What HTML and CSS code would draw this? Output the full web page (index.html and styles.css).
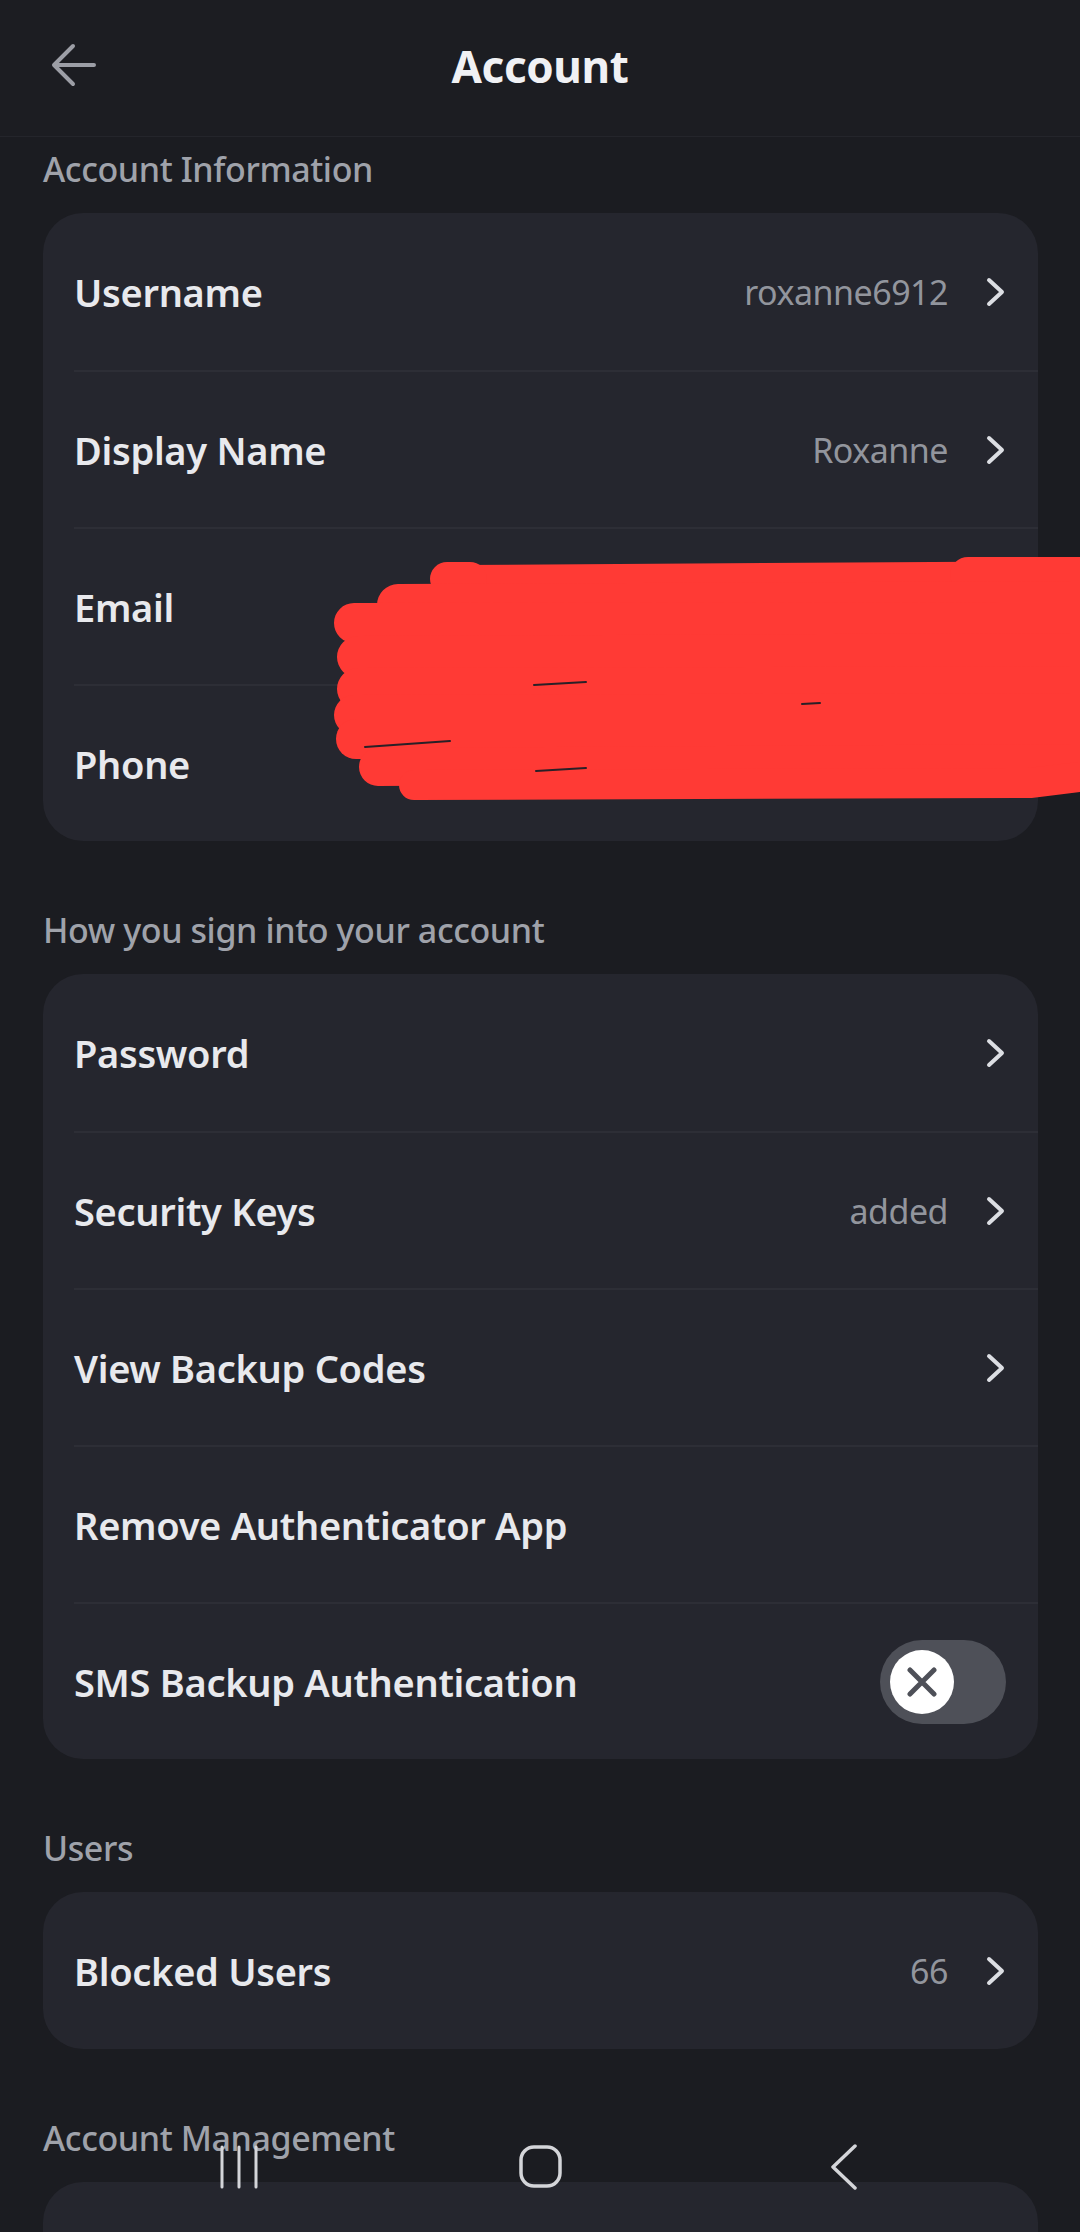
FILE: index.html
```html
<!DOCTYPE html>
<html lang="en">
<head>
<meta charset="utf-8">
<title>Account</title>
<link rel="stylesheet" href="styles.css">
</head>
<body>
<div class="screen">
  <header class="topbar">
    <svg class="back" width="48" height="44" viewBox="50 43 48 44" aria-hidden="true">
      <path d="M94 65 H55 M73 46 L54 65 L73 84" fill="none" stroke="#9c9ea6" stroke-width="4" stroke-linecap="round" stroke-linejoin="round"/>
    </svg>
    <h1 class="title">Account</h1>
  </header>

  <main class="content">
    <section class="section first">
      <h2 class="section-label">Account Information</h2>
      <div class="card card-redacted">
        <div class="row"><div class="row-inner"><span class="label">Username</span><span class="value">roxanne6912</span><svg class="chev" width="22" height="32" viewBox="0 0 22 32"><path d="M4 4 L17 16 L4 28" fill="none" stroke="#dcdee3" stroke-width="4" stroke-linecap="round" stroke-linejoin="round"/></svg></div></div>
        <div class="row"><div class="row-inner"><span class="label">Display Name</span><span class="value">Roxanne</span><svg class="chev" width="22" height="32" viewBox="0 0 22 32"><path d="M4 4 L17 16 L4 28" fill="none" stroke="#dcdee3" stroke-width="4" stroke-linecap="round" stroke-linejoin="round"/></svg></div></div>
        <div class="row"><div class="row-inner"><span class="label">Email</span></div></div>
        <div class="row"><div class="row-inner"><span class="label">Phone</span></div></div>
        <svg class="scribble" width="757" height="275" viewBox="323 542 757 275" aria-hidden="true">
          <g fill="none" stroke="#ff3a35" stroke-linecap="round" stroke-linejoin="round">
            <path stroke-width="40" d="M458 584 L1080 580"/>
            <path stroke-width="34" d="M447 578 L470 578"/>
            <path stroke-width="36" d="M968 574 L1080 574"/>
            <path stroke-width="42" d="M398 604 L1080 601"/>
            <path stroke-width="40" d="M354 622 L1080 621"/>
            <path stroke-width="42" d="M358 656 L1080 653"/>
            <path stroke-width="42" d="M358 688 L1080 686"/>
            <path stroke-width="40" d="M354 714 L1080 712"/>
            <path stroke-width="40" d="M356 738 L1080 738"/>
            <path stroke-width="38" d="M378 766 L1080 762"/>
            <path stroke-width="30" d="M414 784 L1030 782 L1080 776"/>
          </g>
          <g fill="none" stroke="#2a2027" stroke-linecap="round">
            <path stroke-width="2" d="M365 746 L450 740"/>
            <path stroke-width="2" d="M534 684 L586 681"/>
            <path stroke-width="2" d="M536 770 L586 767"/>
            <path stroke-width="2" d="M802 703 L820 702"/>
          </g>
        </svg>
      </div>
    </section>

    <section class="section">
      <h2 class="section-label">How you sign into your account</h2>
      <div class="card">
        <div class="row"><div class="row-inner"><span class="label">Password</span><svg class="chev" width="22" height="32" viewBox="0 0 22 32"><path d="M4 4 L17 16 L4 28" fill="none" stroke="#dcdee3" stroke-width="4" stroke-linecap="round" stroke-linejoin="round"/></svg></div></div>
        <div class="row"><div class="row-inner"><span class="label">Security Keys</span><span class="value">added</span><svg class="chev" width="22" height="32" viewBox="0 0 22 32"><path d="M4 4 L17 16 L4 28" fill="none" stroke="#dcdee3" stroke-width="4" stroke-linecap="round" stroke-linejoin="round"/></svg></div></div>
        <div class="row"><div class="row-inner"><span class="label">View Backup Codes</span><svg class="chev" width="22" height="32" viewBox="0 0 22 32"><path d="M4 4 L17 16 L4 28" fill="none" stroke="#dcdee3" stroke-width="4" stroke-linecap="round" stroke-linejoin="round"/></svg></div></div>
        <div class="row"><div class="row-inner"><span class="label">Remove Authenticator App</span></div></div>
        <div class="row"><div class="row-inner"><span class="label">SMS Backup Authentication</span>
          <span class="toggle"><span class="knob"><svg width="30" height="30" viewBox="0 0 30 30"><path d="M3 3 L27 27 M27 3 L3 27" stroke="#4e5058" stroke-width="5" stroke-linecap="round"/></svg></span></span>
        </div></div>
      </div>
    </section>

    <section class="section">
      <h2 class="section-label">Users</h2>
      <div class="card">
        <div class="row"><div class="row-inner"><span class="label">Blocked Users</span><span class="value">66</span><svg class="chev" width="22" height="32" viewBox="0 0 22 32"><path d="M4 4 L17 16 L4 28" fill="none" stroke="#dcdee3" stroke-width="4" stroke-linecap="round" stroke-linejoin="round"/></svg></div></div>
      </div>
    </section>

    <section class="section">
      <h2 class="section-label">Account Management</h2>
      <div class="card">
        <div class="row"><div class="row-inner"></div></div>
      </div>
    </section>
  </main>

  <nav class="navbar" aria-label="System navigation">
    <svg class="nav-recent" width="44" height="46" viewBox="0 0 44 46"><path d="M5 3 V43 M22 3 V43 M39 3 V43" stroke="#d4d5d9" stroke-width="3" stroke-linecap="round"/></svg>
    <svg class="nav-home" width="46" height="46" viewBox="0 0 46 46"><rect x="3" y="3" width="39" height="39" rx="13" fill="none" stroke="#d4d5d9" stroke-width="3.5"/></svg>
    <svg class="nav-back" width="30" height="46" viewBox="0 0 30 46"><path d="M26 2 L4 23 L26 44" fill="none" stroke="#d4d5d9" stroke-width="3.5" stroke-linecap="round" stroke-linejoin="round"/></svg>
  </nav>
</div>
</body>
</html>
```

FILE: styles.css
```css
* { box-sizing: border-box; }

html, body {
  margin: 0;
  padding: 0;
  background: #1b1c21;
}

body {
  width: 1080px;
  height: 2232px;
  overflow: hidden;
  font-family: "Noto Sans", "Open Sans", sans-serif;
  color: #e6e7eb;
}

.screen {
  position: relative;
  width: 1080px;
  height: 2232px;
  overflow: hidden;
  background: #1b1c21;
}

.topbar {
  height: 137px;
  display: flex;
  align-items: center;
  justify-content: center;
  position: relative;
  background: #1c1d22;
  border-bottom: 1px solid #24252b;
  padding-bottom: 4px;
}

.back {
  position: absolute;
  left: 50px;
  top: 43px;
}

.title {
  margin: 0;
  font-size: 44px;
  font-weight: 700;
  color: #f0f1f4;
  letter-spacing: -0.4px;
}

.content {
  padding: 0 42px 0 43px;
}

.section {
  margin-top: 67px;
}

.section.first {
  margin-top: 10px;
}

.section-label {
  margin: 0 0 22px;
  font-size: 34px;
  line-height: 44px;
  font-weight: 500;
  color: #9fa2aa;
  letter-spacing: -0.4px;
}

.card {
  position: relative;
  background: #25262e;
  border-radius: 40px;
}

.row {
  padding-left: 31px;
}

.row-inner {
  height: 157px;
  display: flex;
  align-items: center;
  padding-right: 31px;
  border-top: 2px solid #2d2e36;
}

.row:first-child .row-inner {
  border-top: none;
}

.label {
  flex: 1;
  font-size: 38px;
  font-weight: 600;
  color: #e8e9ed;
  letter-spacing: -0.3px;
}

.value {
  font-size: 34px;
  font-weight: 400;
  color: #92959d;
  margin-right: 37px;
  letter-spacing: -0.5px;
}

.chev {
  display: block;
  flex: none;
}

.toggle {
  width: 126px;
  height: 84px;
  border-radius: 42px;
  background: #4e5058;
  display: flex;
  align-items: center;
  padding-left: 10px;
  margin-right: 1px;
}

.knob {
  width: 64px;
  height: 64px;
  border-radius: 50%;
  background: #ffffff;
  display: flex;
  align-items: center;
  justify-content: center;
}

.knob svg {
  display: block;
}

.scribble {
  position: absolute;
  left: 280px;
  top: 330px;
}

.navbar {
  position: absolute;
  left: 0;
  right: 0;
  top: 2144px;
  height: 46px;
}

.nav-recent {
  position: absolute;
  left: 217px;
  top: 0;
}

.nav-home {
  position: absolute;
  left: 518px;
  top: 0;
}

.nav-back {
  position: absolute;
  left: 829px;
  top: 0;
}
```
